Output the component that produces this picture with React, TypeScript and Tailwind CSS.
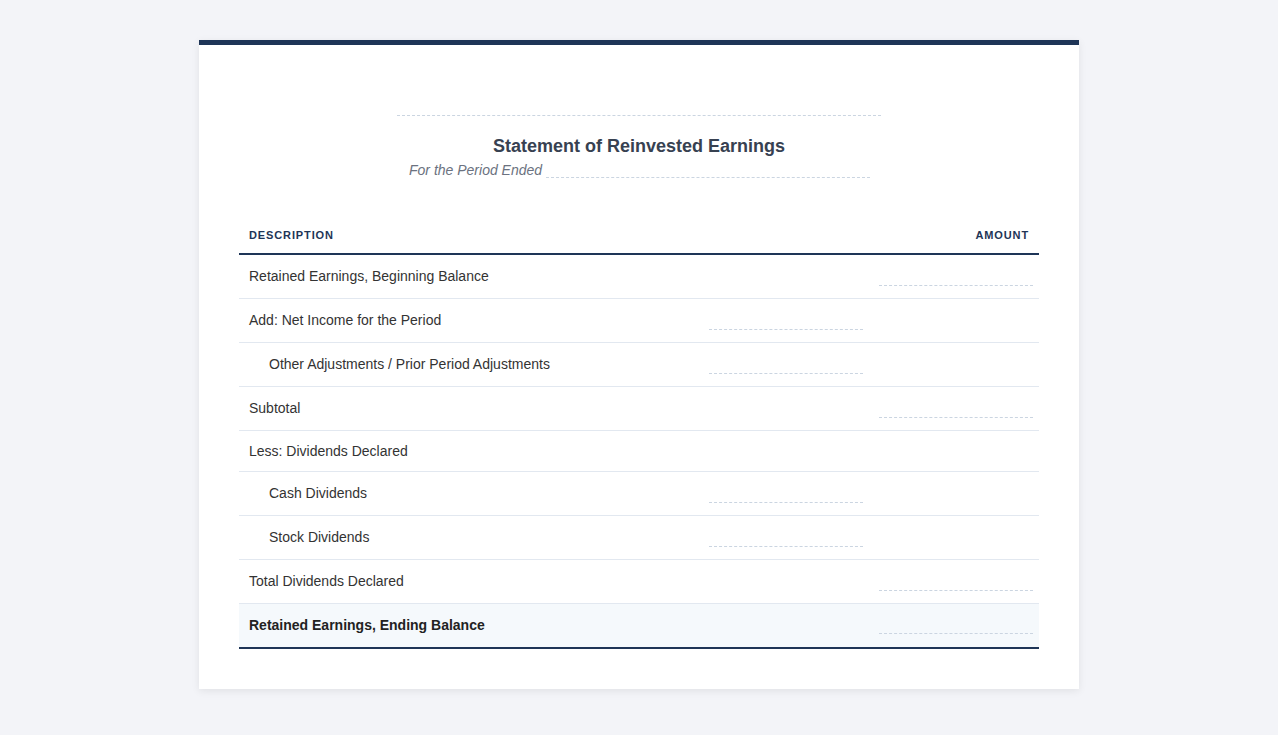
export default function App() {
  const Dash = ({ w }: { w: string }) => <div className={`border-b border-dashed border-[#cbd5e1] ${w}`} />;
  const rows: { t: string; mid?: boolean; amt?: boolean; indent?: boolean; h?: string; bold?: boolean }[] = [
    { t: "Retained Earnings, Beginning Balance", amt: true },
    { t: "Add: Net Income for the Period", mid: true },
    { t: "Other Adjustments / Prior Period Adjustments", mid: true, indent: true },
    { t: "Subtotal", amt: true },
    { t: "Less: Dividends Declared", h: "h-[41px]" },
    { t: "Cash Dividends", mid: true, indent: true },
    { t: "Stock Dividends", mid: true, indent: true },
    { t: "Total Dividends Declared", amt: true },
  ];
  return (
    <div className="min-h-screen bg-[#f3f4f8] pt-[40px] pb-[40px]" style={{ fontFamily: "'Liberation Sans', Arial, sans-serif" }}>
      <div className="mx-auto w-[880px] bg-white border-t-[5px] border-[#1e3557] shadow-[0_2px_8px_rgba(0,0,0,0.08)] px-[40px] pt-[70px] pb-[40px]">
        <div className="flex justify-center"><Dash w="w-[484px]" /></div>
        <div className="text-center text-[18px] font-bold text-[#374151] mt-[19px] leading-[22px]">Statement of Reinvested Earnings</div>
        <div className="flex items-end ml-[170px] mt-[4px]">
          <span className="italic text-[14px] text-[#6b7280] leading-[18px]">For the Period Ended</span>
          <div className="ml-[4px] mb-[1px]"><Dash w="w-[324px]" /></div>
        </div>
        <div className="mt-[38px] flex justify-between items-center px-[10px] h-[38px] border-b-2 border-[#1e3557] text-[11px] font-bold tracking-[0.08em] text-[#1e3557]">
          <span>DESCRIPTION</span><span>AMOUNT</span>
        </div>
        {rows.map((r, i) => (
          <div key={i} className={`grid grid-cols-[1fr_170px_170px] border-b border-[#e2e8f0] text-[14px] text-[#333] ${r.h ?? "h-[44px]"}`}>
            <div className={`flex items-center ${r.indent ? "pl-[30px]" : "pl-[10px]"}`}>{r.t}</div>
            <div className="flex items-end justify-end pr-[6px] pb-[12px]">{r.mid && <Dash w="w-[154px]" />}</div>
            <div className="flex items-end justify-end pr-[6px] pb-[12px]">{r.amt && <Dash w="w-[154px]" />}</div>
          </div>
        ))}
        <div className="grid grid-cols-[1fr_170px_170px] border-b-2 border-[#1e3557] bg-[#f5f9fc] h-[45px] text-[14px] font-bold text-[#222]">
          <div className="flex items-center pl-[10px]">Retained Earnings, Ending Balance</div>
          <div />
          <div className="flex items-end justify-end pr-[6px] pb-[13px]"><Dash w="w-[154px]" /></div>
        </div>
      </div>
    </div>
  );
}
